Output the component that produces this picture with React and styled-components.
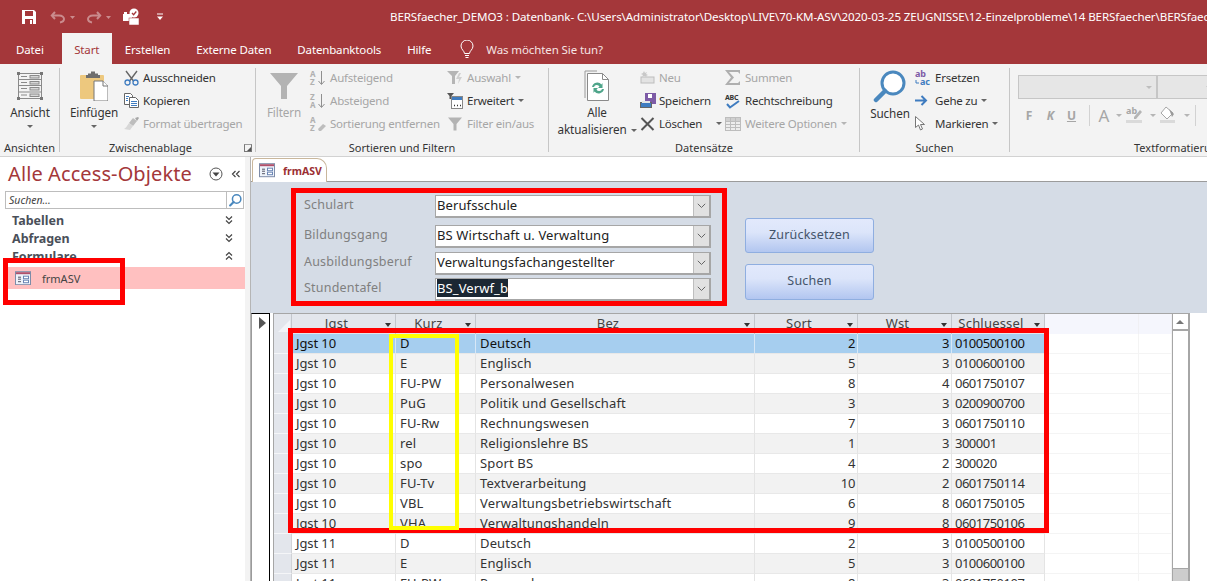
import React from 'react'
import styled, { createGlobalStyle } from 'styled-components'

const GlobalStyle = createGlobalStyle`
  html, body { margin: 0; padding: 0; background: #fff; }
  body { font-family: "Noto Sans", "Open Sans", sans-serif; font-size: 12px; color: #333; }
  * { box-sizing: border-box; }
`

const RED = '#A4373A'

const Page = styled.div`
  position: relative;
  width: 1207px;
  height: 581px;
  overflow: hidden;
  display: flex;
  flex-direction: column;
`

const TitleBar = styled.div`
  height: 33px;
  background: ${RED};
  display: flex;
  align-items: center;
  padding-left: 21px;
  color: #fff;
  flex: none;
`

const QuickIcon = styled.div`
  width: ${p => p.$w || 16}px;
  height: 18px;
  display: flex;
  align-items: center;
  opacity: ${p => (p.$off ? 0.42 : 1)};
  flex: none;
`

const Title = styled.div`
  margin-left: 226px;
  white-space: nowrap;
  font-size: 11.6px;
  letter-spacing: -0.12px;
  flex: none;
`

const TabBar = styled.div`
  height: 31px;
  background: ${RED};
  display: flex;
  align-items: stretch;
  padding-left: 3px;
  flex: none;
`

const Tab = styled.div`
  padding: 2px ${p => p.$pad || 13}px 0;
  margin-right: ${p => p.$mr || 0}px;
  display: flex;
  align-items: center;
  font-size: 11.5px;
  letter-spacing: -0.15px;
  color: ${p => (p.$active ? RED : '#fff')};
  background: ${p => (p.$active ? '#F3F3F3' : 'transparent')};
`

const TellMe = styled.div`
  margin-left: 16px;
  display: flex;
  align-items: center;
  gap: 12px;
  color: #f6e4e4;
  font-size: 11.5px;
  letter-spacing: -0.1px;
  padding-top: 2px;
`

const Ribbon = styled.div`
  height: 93px;
  background: #F3F3F3;
  border-bottom: 1px solid #D2D2D2;
  display: flex;
  flex: none;
  overflow: hidden;
`

const Group = styled.div`
  width: ${p => p.$w}px;
  flex: none;
  display: flex;
  flex-direction: column;
  margin-top: 4px;
  height: 84px;
  border-right: ${p => (p.$last ? 'none' : '1px solid #C6C6C6')};
  position: relative;
`

const GroupBody = styled.div`
  flex: 1;
  display: flex;
  min-height: 0;
  padding-left: ${p => p.$pl || 0}px;
`

const GroupLabel = styled.div`
  height: 16px;
  margin-bottom: -5px;
  text-align: ${p => (p.$left ? 'left' : 'center')};
  font-size: 11px;
  line-height: 14px;
  color: #333;
  white-space: nowrap;
  padding-left: ${p => p.$pl || 0}px;
  padding-right: ${p => p.$pr || 0}px;
`

const Launcher = styled.span`
  position: absolute;
  right: 3px;
  bottom: 0;
  width: 8px;
  height: 8px;
  border: 1px solid #777;
  border-top-color: #999;
  &::after {
    content: '';
    position: absolute;
    right: 0;
    bottom: 0;
    border: 2px solid transparent;
    border-right-color: #555;
    border-bottom-color: #555;
  }
`

const BigButton = styled.div`
  width: ${p => p.$w}px;
  flex: none;
  display: flex;
  flex-direction: column;
  align-items: center;
  padding-top: ${p => p.$pt ?? 3}px;
  font-size: 11.7px;
  line-height: 17px;
  letter-spacing: -0.1px;
  color: ${p => (p.$off ? '#A6A6A6' : '#333')};
  white-space: nowrap;
  text-align: center;
  margin-right: ${p => p.$mr || 0}px;
`

const BigIcon = styled.div`
  height: ${p => p.$h || 30}px;
  margin-bottom: ${p => p.$mb ?? 2}px;
  display: flex;
  align-items: center;
  justify-content: center;
`

const Caret = styled.span`
  display: inline-block;
  width: 0;
  height: 0;
  border: 3px solid transparent;
  border-top: 3px solid ${p => (p.$off ? '#B5B5B5' : '#666')};
  border-bottom: 0;
  margin-left: ${p => p.$ml ?? 4}px;
  margin-top: ${p => p.$mt || 0}px;
  vertical-align: middle;
  flex: none;
`

const Stack = styled.div`
  width: ${p => p.$w}px;
  flex: none;
  margin-top: -2px;
  display: flex;
  flex-direction: column;
`

const SmallItem = styled.div`
  height: 23px;
  display: flex;
  align-items: center;
  font-size: 11.5px;
  letter-spacing: -0.22px;
  white-space: nowrap;
  color: ${p => (p.$off ? '#A6A6A6' : '#333')};
`

const SmallIcon = styled.div`
  width: ${p => p.$w || 19}px;
  flex: none;
  display: flex;
  align-items: center;
  justify-content: flex-start;
`

const FormatPane = styled.div`
  padding: 7px 0 0 8px;
`

const GreyCombos = styled.div`
  display: flex;
  width: 240px;
  height: 24px;
`

const GreyCombo = styled.div`
  width: ${p => p.$w}px;
  flex: none;
  background: #E6E6E6;
  border: 1px solid #C6C6C6;
  position: relative;
  &::after {
    content: '';
    position: absolute;
    right: 4px;
    top: 10px;
    border: 3px solid transparent;
    border-top-color: #BEBEBE;
    border-bottom: 0;
  }
`

const FormatRow = styled.div`
  display: flex;
  align-items: center;
  height: 22px;
  margin-top: 5px;
  color: #A6A6A6;
  font-weight: 700;
  font-size: 12px;
`

const FormatKey = styled.span`
  width: ${p => p.$w || 21}px;
  text-align: center;
  font-style: ${p => (p.$i ? 'italic' : 'normal')};
  font-size: ${p => p.$size || 12}px;
  font-weight: ${p => (p.$size ? 400 : 700)};
  text-decoration: ${p => (p.$u ? 'underline' : 'none')};
  flex: none;
  display: flex;
  justify-content: center;
`

const FormatSep = styled.span`
  width: 1px;
  height: 21px;
  background: #D2D2D2;
  margin: 0 ${p => p.$mr || 6}px 0 ${p => p.$ml || 7}px;
  flex: none;
`

const Main = styled.div`
  flex: 1;
  display: flex;
  min-height: 0;
`

const NavPane = styled.div`
  width: 245px;
  flex: none;
  background: #fff;
  padding-top: 1px;
`

const NavHead = styled.div`
  display: flex;
  align-items: center;
  gap: 8px;
  height: 31px;
  padding: 0 4px 0 8px;
`

const NavTitle = styled.div`
  font-size: 20px;
  color: ${RED};
  flex: 1;
  white-space: nowrap;
  letter-spacing: 0.1px;
`

const NavSearch = styled.div`
  margin: 2px 1px 0 5px;
  height: 18px;
  border: 1px solid #BDBDBD;
  display: flex;
  align-items: center;
  font-size: 10.5px;
  font-style: italic;
  color: #444;
  padding-left: 3px;
  justify-content: space-between;
`

const SearchBtn = styled.div`
  width: 17px;
  height: 16px;
  border-left: 1px solid #BDBDBD;
  display: flex;
  align-items: center;
  justify-content: center;
`

const NavGroup = styled.div`
  height: 18px;
  margin-top: ${p => p.$mt || 0}px;
  display: flex;
  align-items: center;
  justify-content: space-between;
  padding: 0 11px 0 12px;
  font-weight: 700;
  font-size: 12.5px;
  color: #4A4F59;
`

const NavItem = styled.div`
  height: 22px;
  margin-top: 2px;
  margin-left: 5px;
  background: #FFC0C0;
  display: flex;
  align-items: center;
  gap: 11px;
  padding-left: 10px;
  font-size: 11px;
  color: #444;
`

const Splitter = styled.div`
  width: 6px;
  flex: none;
  background: #F3F3F3;
  border-right: 1px solid #B5B5B5;
`

const Content = styled.div`
  flex: 1;
  min-width: 0;
  display: flex;
  flex-direction: column;
`

const DocStrip = styled.div`
  height: 25px;
  flex: none;
  background: #fff;
  border-bottom: 1px solid #9B9B9B;
  padding: 1px 0 0 1px;
`

const DocTab = styled.div`
  width: 75px;
  height: 24px;
  border: 1px solid #C9B79C;
  border-bottom: none;
  border-radius: 4px 10px 0 0;
  display: flex;
  align-items: center;
  gap: 8px;
  padding-left: 6px;
  color: #9B2F33;
  font-weight: 700;
  font-size: 10.5px;
  background: #fff;
`

const FormHeader = styled.div`
  height: 131px;
  flex: none;
  background: #D5DCE6;
  display: flex;
  padding: 13px 0 0 53px;
`

const Filters = styled.div`
  width: 407px;
  flex: none;
`

const FilterRow = styled.div`
  display: grid;
  grid-template-columns: 131px 276px;
  align-items: center;
  height: 23px;
  margin-top: ${p => p.$mt || 0}px;
`

const FilterLabel = styled.div`
  font-size: 12.5px;
  color: #808080;
  letter-spacing: 0.2px;
  position: relative;
  top: -2px;
`

const Combo = styled.div`
  height: 23px;
  border: 2px solid #A6A6A6;
  border-top-width: 1px;
  border-left-width: 1px;
  background: #fff;
  display: flex;
  font-size: 13px;
  color: #222;
  letter-spacing: 0.1px;
  line-height: 19px;
`

const ComboValue = styled.div`
  flex: 1;
  padding-left: 1px;
  white-space: nowrap;
  overflow: hidden;
  & > mark {
    background: #1B2733;
    color: #fff;
  }
`

const ComboArrow = styled.div`
  width: 16px;
  flex: none;
  background: #E1E1E1;
  border-left: 1px solid #BEBEBE;
  display: flex;
  align-items: center;
  justify-content: center;
`

const Actions = styled.div`
  margin: 23px 0 0 34px;
  width: 129px;
  display: flex;
  flex-direction: column;
  gap: 11px;
`

const ActionButton = styled.div`
  height: ${p => p.$h}px;
  border: 1px solid #8FAEE0;
  border-radius: 3px;
  background: linear-gradient(#E2E9FC, #DCE5FA 40%, #B2C6F0);
  color: #44546A;
  font-size: 12.5px;
  letter-spacing: 0.2px;
  padding: 0 0 3px;
  display: flex;
  align-items: center;
  justify-content: center;
`

const SheetArea = styled.div`
  flex: 1;
  min-height: 0;
  display: flex;
  background: #fff;
`

const RecordPane = styled.div`
  width: 19px;
  flex: none;
  border-top: 1px solid #000;
  border-right: 1px solid #000;
  border-left: 1px solid #9B9B9B;
  position: relative;
  &::after {
    content: '';
    position: absolute;
    left: 7px;
    top: 3px;
    border: 6px solid transparent;
    border-left: 7px solid #555;
    border-right: 0;
  }
`

const Sheet = styled.div`
  width: 917px;
  flex: none;
  display: flex;
  border-top: 1px solid #A6A6A6;
  border-right: 2px solid #A6A6A6;
  border-left: 1px solid #A6A6A6;
  margin-left: 3px;
  overflow: hidden;
`

const Rows = styled.div`
  flex: 1;
  min-width: 0;
`

const COLUMNS = '18px 104px 80px 279px 103px 94px 93px 94px 1fr'

const HeaderRow = styled.div`
  display: grid;
  grid-template-columns: ${COLUMNS};
  height: 20px;
`

const HeadCell = styled.div`
  position: relative;
  background: ${p => (p.$empty ? '#F5F6FD' : '#E3E6EC')};
  border-right: 1px solid ${p => (p.$empty ? '#F0F0F4' : '#C3C6CC')};
  text-align: center;
  font-size: 13px;
  letter-spacing: 0.2px;
  line-height: 18px;
  color: #444;
  padding-right: 14px;
  overflow: hidden;
`

const HeadArrow = styled.span`
  position: absolute;
  right: 4px;
  top: 9px;
  border: 3px solid transparent;
  border-top: 4px solid #333;
  border-bottom: 0;
`

const Corner = styled.svg`
  display: block;
`

const DataRow = styled.div`
  display: grid;
  grid-template-columns: ${COLUMNS};
  height: 20px;
  background: ${p => (p.$selected ? '#A6CEEF' : p.$alt ? '#F2F2F2' : '#fff')};
  font-size: 13px;
  line-height: 19px;
  color: ${p => (p.$selected ? '#111' : '#333')};
`

const RowSelector = styled.div`
  background: #E3E6EC;
  border-bottom: 1px solid #F5F6F8;
  border-right: 1px solid #D0D2D6;
`

const Cell = styled.div`
  border-right: 1px solid ${p => (p.$selected ? '#D7E7F6' : '#E4E4E4')};
  border-bottom: 1px solid #E8E8E8;
  padding: 0 ${p => (p.$num ? 1.5 : 2)}px 0 ${p => (p.$code ? 3 : 4)}px;
  text-align: ${p => (p.$num ? 'right' : 'left')};
  letter-spacing: ${p => p.$ls || 0}px;
  white-space: nowrap;
  overflow: hidden;
`

const BlankCell = styled.div`
  background: #fff;
  border-right: 1px solid #F4F4F4;
  border-bottom: 1px solid #F4F4F4;
`

const ScrollBar = styled.div`
  width: 16px;
  flex: none;
  display: flex;
  flex-direction: column;
  background: #CDCDCD;
  border-left: 1px solid #A6A6A6;
`

const ScrollUp = styled.div`
  height: 17px;
  flex: none;
  background: #fff;
  border-bottom: 2px solid #A6A6A6;
  position: relative;
  &::after {
    content: '';
    position: absolute;
    left: 3px;
    top: 6px;
    border: 4px solid transparent;
    border-bottom: 4px solid #777;
    border-top: 0;
  }
`

const ScrollThumb = styled.div`
  height: 238px;
  flex: none;
  background: #fff;
  border-bottom: 1px solid #A6A6A6;
`

const Highlight = styled.div`
  position: absolute;
  left: ${p => p.$x}px;
  top: ${p => p.$y}px;
  width: ${p => p.$w}px;
  height: ${p => p.$h}px;
  border: ${p => p.$t || 5}px solid ${p => p.$color || '#FF0000'};
  pointer-events: none;
`

const FormIcon = ({ w = 16 }) => (
  <svg width={w} height={w * 0.9} viewBox="0 0 16 14">
    <rect x="0.5" y="0.5" width="15" height="13" fill="#EEF3FA" stroke="#7E8CA8" />
    <rect x="1" y="1" width="14" height="2" fill="#B0506A" />
    <path d="M3 6h3M3 8h3M3 10.5h3" stroke="#556" />
    <rect x="8.5" y="5" width="5" height="2.5" fill="#fff" stroke="#6C86B5" />
    <rect x="8.5" y="9" width="5" height="2.5" fill="#fff" stroke="#6C86B5" />
  </svg>
)

const Chevrons = ({ up, left }) => (
  <svg width="10" height="10" viewBox="0 0 10 10" fill="none" stroke="#444" strokeWidth="1.2">
    {left
      ? <path d="M4.500 2 1.500 5l3 3M8.500 2l-3 3 3 3" />
      : up
        ? <path d="M2 4.500 5 1.500l3 3M2 8.500l3-3 3 3" />
        : <path d="M2 1.500l3 3 3-3M2 5.500l3 3 3-3" />}
  </svg>
)

const SaveIcon = () => (
  <svg width="16" height="16" viewBox="0 0 16 16">
    <path d="M1 1h12l2 2v12H1z" fill="#fff" />
    <rect x="4" y="2" width="8" height="5" fill={RED} />
    <rect x="4" y="10" width="8" height="5" fill={RED} />
    <rect x="9" y="11" width="2" height="4" fill="#fff" />
  </svg>
)

const UndoIcon = ({ flip }) => (
  <svg width="26" height="14" viewBox="0 0 26 14" fill="none">
    <g transform={flip ? 'translate(16 0) scale(-1 1)' : undefined}>
      <path d="M5 2 1.800 5.500 5 9" stroke="#fff" strokeWidth="2" />
      <path d="M2 5.500h7c3.500 0 5 2 5 3.500S12.500 12 10 12.500" stroke="#fff" strokeWidth="2" />
    </g>
    <path d="M20 6h5l-2.500 3z" fill="#fff" />
  </svg>
)

const AccessCheckIcon = () => (
  <svg width="18" height="18" viewBox="0 0 18 18">
    <rect x="1" y="6" width="9" height="7" fill="#fff" />
    <rect x="7" y="10" width="10" height="7" fill="#fff" stroke={RED} strokeWidth="0.5" />
    <rect x="2" y="4" width="3" height="3" fill="#fff" />
    <circle cx="12" cy="5" r="4.500" fill="#fff" />
    <path d="M10 5l1.600 1.700L14.300 3.500" stroke={RED} strokeWidth="1.300" fill="none" />
  </svg>
)

const QuickDrop = () => (
  <svg width="8" height="8" viewBox="0 0 8 8">
    <path d="M1 1h6" stroke="#fff" />
    <path d="M1 3.500h6L4 7z" fill="#fff" />
  </svg>
)

const BulbIcon = () => (
  <svg width="14" height="19" viewBox="0 0 14 19" fill="none" stroke="#fff" strokeWidth="1">
    <path d="M4.500 13.500C4.500 11 1 9.500 1 6a6 6 0 0 1 12 0c0 3.500-3.500 5-3.500 7.500z" />
    <path d="M5 15.500h4M5.500 17.500h3" />
  </svg>
)

const ViewIcon = () => (
  <svg width="28" height="30" viewBox="0 0 28 30" fill="none" stroke="#8A8A8A">
    <rect x="2.500" y="2.500" width="23" height="25" />
    <path d="M2.500 8.500h23M2.500 14.500h23M2.500 21h23" />
    <rect x="14" y="4.500" width="9" height="2.500" fill="#D7D7D7" />
    <rect x="14" y="10.500" width="9" height="2.500" fill="#D7D7D7" />
    <rect x="14" y="16.500" width="9" height="2.500" fill="#D7D7D7" />
    <rect x="14" y="23" width="9" height="2.500" fill="#D7D7D7" />
    <path d="M5 5.500h6M5 11.500h6M5 17.500h6M5 24h6" />
    <g fill="#777" stroke="none">
      <rect x="1" y="1" width="3" height="3" />
      <rect x="24" y="1" width="3" height="3" />
      <rect x="1" y="26" width="3" height="3" />
      <rect x="24" y="26" width="3" height="3" />
    </g>
  </svg>
)

const PasteIcon = () => (
  <svg width="28" height="30" viewBox="0 0 28 30">
    <rect x="0" y="4" width="24" height="24" rx="1" fill="#EDC87E" />
    <path d="M8 4V2.500h3V0.500h4v2h3V4h2v3H6V4z" fill="#6E6E6E" />
    <path d="M14 10h9l5 5v15H14z" fill="#fff" stroke="#777" />
    <path d="M23 10v5h5" fill="#fff" stroke="#777" />
  </svg>
)

const ScissorsIcon = () => (
  <svg width="15" height="16" viewBox="0 0 15 16" fill="none">
    <path d="M2 1l7.500 10M13 1 5.500 11" stroke="#666" strokeWidth="1.400" />
    <circle cx="3.500" cy="12.500" r="2.500" stroke="#3F7CC0" strokeWidth="1.300" />
    <circle cx="11.500" cy="12.500" r="2.500" stroke="#3F7CC0" strokeWidth="1.300" />
  </svg>
)

const CopyIcon = () => (
  <svg width="15" height="15" viewBox="0 0 15 15" fill="#fff">
    <path d="M.5.500h6l2 2v9h-8z" stroke="#666" />
    <path d="M5.500 4.500h6l3 3v7h-9z" stroke="#666" />
    <path d="M7 8.500h6M7 10.500h6M7 12.500h6" stroke="#3F7CC0" />
    <path d="M2 3.500h3M2 5.500h2M2 7.500h2" stroke="#3F7CC0" />
  </svg>
)

const BrushIcon = () => (
  <svg width="15" height="14" viewBox="0 0 15 14">
    <path d="M9 1l4 3-4 5-4-3z" fill="#BDBDBD" />
    <path d="M5 6l4 3-3 4-6-1c2-1 3-3 5-6z" fill="#D7D7D7" />
    <path d="M11 1l3-1 1 1-2 3z" fill="#A6A6A6" />
  </svg>
)

const FunnelIcon = ({ w = 28, h = 28, color = '#B3B3B3' }) => (
  <svg width={w} height={h} viewBox="0 0 28 28">
    <path d="M0 1h28L17 14v13h-6V14z" fill={color} />
  </svg>
)

const SortIcon = ({ a, b, eraser }) => (
  <svg width="16" height="16" viewBox="0 0 16 16" overflow="visible" fontFamily="Noto Sans" fontSize="8" fontWeight="700" fill="#B0B0B0">
    <text x="0" y="7">{a}</text>
    <text x="0" y="15">{b}</text>
    {eraser
      ? <path d="M8 13l5-5 3 2-5 5H9z" fill="#BDBDBD" />
      : <path d="M11.500 1v13M8.500 11l3 3.500 3-3.500" fill="none" stroke="#8F8F8F" />}
  </svg>
)

const SelectionFilterIcon = () => (
  <svg width="16" height="15" viewBox="0 0 16 15">
    <path d="M0 1h12L8 6v8H5V6z" fill="#B5B5B5" />
    <path d="M12 3 9 9h3l-1 5 4-7h-3l2-4z" fill="#D0D0D0" />
  </svg>
)

const AdvancedFilterIcon = () => (
  <svg width="16" height="16" viewBox="0 0 16 16">
    <path d="M0 0h7L4.500 3v3h-2V3z" fill="#555" />
    <rect x="4.500" y="3.500" width="11" height="12" fill="#fff" stroke="#888" />
    <rect x="5" y="4" width="10" height="3" fill="#3F7CC0" />
    <path d="M7 12.500h1M10 12.500h1M13 12.500h1" stroke="#333" strokeWidth="1.500" />
  </svg>
)

const RefreshIcon = () => (
  <svg width="26" height="33" viewBox="0 0 26 33" fill="none">
    <path d="M1 28V1h12" stroke="#9A9A9A" />
    <path d="M3.500 30.500V3.500h15l6 6v21z" fill="#fff" stroke="#8A8A8A" />
    <path d="M18.500 3.500v6h6" stroke="#8A8A8A" />
    <path d="M8 17a5.500 5.500 0 0 1 9.500-2.500l1-1.500v5h-4.500l1.500-1.500A3 3 0 0 0 10 17z" fill="#4FA58A" />
    <path d="M20 19a5.500 5.500 0 0 1-9.500 2.500l-1 1.500v-5H14l-1.500 1.500A3 3 0 0 0 18 19z" fill="#4FA58A" />
  </svg>
)

const NewIcon = () => (
  <svg width="15" height="13" viewBox="0 0 15 13">
    <rect x="1" y="6" width="13" height="6" fill="#E3E3E3" stroke="#BDBDBD" />
    <path d="M4 0l1 2 2-1-1 2 2 1-2 1 1 1-3-1-2 1 1-2-2-1 2-1z" fill="#C8C8C8" />
  </svg>
)

const SaveRecordIcon = () => (
  <svg width="16" height="15" viewBox="0 0 16 15">
    <rect x="5" y="0" width="11" height="11" fill="#7D5BA6" />
    <rect x="8" y="1" width="4" height="4" fill="#fff" />
    <rect x="0.500" y="9.500" width="11" height="5" fill="#3F7CC0" stroke="#666" />
    <rect x="2" y="8" width="8" height="2" fill="#E6E6E6" />
  </svg>
)

const CrossIcon = () => (
  <svg width="15" height="14" viewBox="0 0 15 14">
    <path d="M1.500 1l12 12M13.500 1l-12 12" stroke="#555" strokeWidth="2" />
  </svg>
)

const SigmaIcon = () => (
  <svg width="16" height="15" viewBox="0 0 16 15">
    <path d="M0 0h15v4l-2-2H4l5 5.500L4 13h9l2-2v4H0l6-7.500z" fill="#AFAFAF" />
  </svg>
)

const SpellIcon = () => (
  <svg width="16" height="16" viewBox="0 0 16 16" overflow="visible">
    <text x="0" y="6.500" fontFamily="Noto Sans" fontSize="7" fontWeight="700" fill="#333">ABC</text>
    <path d="M2 11l3 3.500L14 8" fill="none" stroke="#3F7CC0" strokeWidth="2" />
  </svg>
)

const GridIcon = () => (
  <svg width="16" height="14" viewBox="0 0 16 14" fill="#EDEDED" stroke="#BDBDBD">
    <rect x=".5" y=".5" width="15" height="13" />
    <rect x=".5" y=".5" width="15" height="4" fill="#D0D0D0" />
    <path d="M5.500.5v13M10.500.5v13M.5 7.500h15M.5 10.500h15" fill="none" />
  </svg>
)

const LensIcon = ({ s = 34, sw = 3 }) => (
  <svg width={s} height={s} viewBox="0 0 34 34" fill="none">
    <circle cx="20" cy="13" r="11" stroke="#4A88BE" strokeWidth={sw} fill="#fff" />
    <path d="M12 21 3 30" stroke="#4A88BE" strokeWidth={sw + 1.500} strokeLinecap="round" />
  </svg>
)

const ReplaceIcon = () => (
  <svg width="17" height="16" viewBox="0 0 17 16" overflow="visible" fontFamily="Noto Sans" fontWeight="700" fontSize="9">
    <text x="0" y="7" fill="#7D5BA6">ab</text>
    <text x="5" y="15" fill="#3F7CC0">ac</text>
    <path d="M1 10v3h3" fill="none" stroke="#3F7CC0" />
  </svg>
)

const ArrowIcon = () => (
  <svg width="13" height="11" viewBox="0 0 13 11">
    <path d="M0 5.500h10M6.500 1l4.500 4.500L6.500 10" fill="none" stroke="#3F7CC0" strokeWidth="2" />
  </svg>
)

const PointerIcon = () => (
  <svg width="11" height="15" viewBox="0 0 11 15">
    <path d="M.5.500v11l3-2.500 2 5 2-1-2-4.500h4z" fill="#fff" stroke="#777" />
  </svg>
)

const ChevronSmall = () => (
  <svg width="9" height="6" viewBox="0 0 9 6" fill="none" stroke="#666">
    <path d="M.8.800 4.500 4.500 8.200.800" />
  </svg>
)

const FilterCircle = () => (
  <svg width="14" height="14" viewBox="0 0 14 14">
    <circle cx="7" cy="7" r="6" fill="none" stroke="#555" />
    <path d="M3.500 5.500h7L7 9.500z" fill="#444" />
  </svg>
)

const HighlightPenIcon = () => (
  <svg width="17" height="18" viewBox="0 0 17 18" overflow="visible">
    <text x="0" y="8" fontFamily="Noto Sans" fontSize="9" fill="#A6A6A6">ab</text>
    <path d="M8 11l6-7 2 2-6 7H8z" fill="#B5B5B5" />
    <rect x="0" y="14" width="16" height="3" fill="#DADADA" />
  </svg>
)

const FillIcon = () => (
  <svg width="16" height="18" viewBox="0 0 16 18">
    <path d="M6 1 1 7l6 6 6-6z" fill="#fff" stroke="#A6A6A6" />
    <path d="M9 3l5 5-2 3z" fill="#9A9A9A" />
    <rect x="0" y="14" width="15" height="3" fill="#DADADA" />
  </svg>
)

const rows = [
  ['Jgst 10', 'D', 'Deutsch', 2, 3, '0100500100'],
  ['Jgst 10', 'E', 'Englisch', 5, 3, '0100600100'],
  ['Jgst 10', 'FU-PW', 'Personalwesen', 8, 4, '0601750107'],
  ['Jgst 10', 'PuG', 'Politik und Gesellschaft', 3, 3, '0200900700'],
  ['Jgst 10', 'FU-Rw', 'Rechnungswesen', 7, 3, '0601750110'],
  ['Jgst 10', 'rel', 'Religionslehre BS', 1, 3, '300001'],
  ['Jgst 10', 'spo', 'Sport BS', 4, 2, '300020'],
  ['Jgst 10', 'FU-Tv', 'Textverarbeitung', 10, 2, '0601750114'],
  ['Jgst 10', 'VBL', 'Verwaltungsbetriebswirtschaft', 6, 8, '0601750105'],
  ['Jgst 10', 'VHA', 'Verwaltungshandeln', 9, 8, '0601750106'],
  ['Jgst 11', 'D', 'Deutsch', 2, 3, '0100500100'],
  ['Jgst 11', 'E', 'Englisch', 5, 3, '0100600100'],
  ['Jgst 11', 'FU-PW', 'Personalwesen', 8, 3, '0601750107'],
]

const headers = ['Jgst', 'Kurz', 'Bez', 'Sort', 'Wst', 'Schluessel']

const filters = [
  { label: 'Schulart', value: 'Berufsschule' },
  { label: 'Bildungsgang', value: 'BS Wirtschaft u. Verwaltung', mt: 7 },
  { label: 'Ausbildungsberuf', value: 'Verwaltungsfachangestellter', mt: 4 },
  { label: 'Stundentafel', value: 'BS_Verwf_b', mt: 3, marked: true },
]

export default function App() {
  return (
    <Page>
      <GlobalStyle />
      <TitleBar>
        <QuickIcon $w={29}><SaveIcon /></QuickIcon>
        <QuickIcon $w={36} $off><UndoIcon /></QuickIcon>
        <QuickIcon $w={36} $off><UndoIcon flip /></QuickIcon>
        <QuickIcon $w={34}><AccessCheckIcon /></QuickIcon>
        <QuickIcon $w={8}><QuickDrop /></QuickIcon>
        <Title>BERSfaecher_DEMO3 : Datenbank- C:\Users\Administrator\Desktop\LIVE\70-KM-ASV\2020-03-25 ZEUGNISSE\12-Einzelprobleme\14 BERSfaecher\BERSfaecher_DEMO3.accdb</Title>
      </TitleBar>

      <TabBar>
        <Tab $mr={5}>Datei</Tab>
        <Tab $active $pad={12.5}>Start</Tab>
        <Tab>Erstellen</Tab>
        <Tab>Externe Daten</Tab>
        <Tab>Datenbanktools</Tab>
        <Tab>Hilfe</Tab>
        <TellMe><BulbIcon />Was möchten Sie tun?</TellMe>
      </TabBar>

      <Ribbon>
        <Group $w={60}>
          <GroupBody>
            <BigButton $w={60}>
              <BigIcon $h={30} $mb={3}><ViewIcon /></BigIcon>
              Ansicht
              <Caret $ml={0} $mt={4} />
            </BigButton>
          </GroupBody>
          <GroupLabel>Ansichten</GroupLabel>
        </Group>

        <Group $w={196}>
          <GroupBody $pl={6}>
            <BigButton $w={56} $mr={2}>
              <BigIcon $h={30} $mb={3}><PasteIcon /></BigIcon>
              Einfügen
              <Caret $ml={0} $mt={4} />
            </BigButton>
            <Stack $w={130}>
              <SmallItem><SmallIcon><ScissorsIcon /></SmallIcon>Ausschneiden</SmallItem>
              <SmallItem><SmallIcon><CopyIcon /></SmallIcon>Kopieren</SmallItem>
              <SmallItem $off><SmallIcon><BrushIcon /></SmallIcon>Format übertragen</SmallItem>
            </Stack>
          </GroupBody>
          <GroupLabel $pr={14}>Zwischenablage</GroupLabel>
          <Launcher />
        </Group>

        <Group $w={293}>
          <GroupBody $pl={11}>
            <BigButton $w={34} $mr={9} $off>
              <BigIcon $h={30} $mb={3}><FunnelIcon /></BigIcon>
              Filtern
            </BigButton>
            <Stack $w={137}>
              <SmallItem $off><SmallIcon $w={20}><SortIcon a="A" b="Z" /></SmallIcon>Aufsteigend</SmallItem>
              <SmallItem $off><SmallIcon $w={20}><SortIcon a="Z" b="A" /></SmallIcon>Absteigend</SmallItem>
              <SmallItem $off><SmallIcon $w={20}><SortIcon a="A" b="Z" eraser /></SmallIcon>Sortierung entfernen</SmallItem>
            </Stack>
            <Stack $w={90}>
              <SmallItem $off><SmallIcon $w={20}><SelectionFilterIcon /></SmallIcon>Auswahl<Caret $off /></SmallItem>
              <SmallItem><SmallIcon $w={20}><AdvancedFilterIcon /></SmallIcon>Erweitert<Caret /></SmallItem>
              <SmallItem $off><SmallIcon $w={20}><FunnelIcon w={16} h={14} /></SmallIcon>Filter ein/aus</SmallItem>
            </Stack>
          </GroupBody>
          <GroupLabel>Sortieren und Filtern</GroupLabel>
        </Group>

        <Group $w={311}>
          <GroupBody $pl={9}>
            <BigButton $w={78} $mr={4} $pt={2}>
              <BigIcon $h={33} $mb={1}><RefreshIcon /></BigIcon>
              Alle
              <span>aktualisieren<Caret /></span>
            </BigButton>
            <Stack $w={85}>
              <SmallItem $off><SmallIcon><NewIcon /></SmallIcon>Neu</SmallItem>
              <SmallItem><SmallIcon><SaveRecordIcon /></SmallIcon>Speichern</SmallItem>
              <SmallItem><SmallIcon><CrossIcon /></SmallIcon>Löschen<Caret $ml={14} /></SmallItem>
            </Stack>
            <Stack $w={130}>
              <SmallItem $off><SmallIcon $w={20}><SigmaIcon /></SmallIcon>Summen</SmallItem>
              <SmallItem><SmallIcon $w={20}><SpellIcon /></SmallIcon>Rechtschreibung</SmallItem>
              <SmallItem $off><SmallIcon $w={20}><GridIcon /></SmallIcon>Weitere Optionen<Caret $off /></SmallItem>
            </Stack>
          </GroupBody>
          <GroupLabel>Datensätze</GroupLabel>
        </Group>

        <Group $w={150}>
          <GroupBody $pl={8}>
            <BigButton $w={44} $mr={3} $pt={2}>
              <BigIcon $h={34} $mb={1}><LensIcon /></BigIcon>
              Suchen
            </BigButton>
            <Stack $w={90}>
              <SmallItem><SmallIcon $w={20}><ReplaceIcon /></SmallIcon>Ersetzen</SmallItem>
              <SmallItem><SmallIcon $w={20}><ArrowIcon /></SmallIcon>Gehe zu<Caret /></SmallItem>
              <SmallItem><SmallIcon $w={20}><PointerIcon /></SmallIcon>Markieren<Caret /></SmallItem>
            </Stack>
          </GroupBody>
          <GroupLabel>Suchen</GroupLabel>
        </Group>

        <Group $w={200} $last>
          <GroupBody>
            <FormatPane>
              <GreyCombos>
                <GreyCombo $w={139} />
                <GreyCombo $w={60} />
              </GreyCombos>
              <FormatRow>
                <FormatKey $w={22}>F</FormatKey>
                <FormatKey $i>K</FormatKey>
                <FormatKey $u>U</FormatKey>
                <FormatSep />
                <FormatKey $w={16} $size={17}>A</FormatKey>
                <Caret $off />
                <FormatKey $w={24}><HighlightPenIcon /></FormatKey>
                <Caret $off />
                <FormatKey $w={24}><FillIcon /></FormatKey>
                <Caret $off />
                <FormatSep $ml={5} />
              </FormatRow>
            </FormatPane>
          </GroupBody>
          <GroupLabel $left $pl={124}>Textformatierung</GroupLabel>
        </Group>
      </Ribbon>

      <Main>
        <NavPane>
          <NavHead>
            <NavTitle>Alle Access-Objekte</NavTitle>
            <FilterCircle />
            <Chevrons left />
          </NavHead>
          <NavSearch>
            Suchen...
            <SearchBtn><LensIcon s={13} sw={4} /></SearchBtn>
          </NavSearch>
          <NavGroup $mt={2}>Tabellen<Chevrons /></NavGroup>
          <NavGroup>Abfragen<Chevrons /></NavGroup>
          <NavGroup>Formulare<Chevrons up /></NavGroup>
          <NavItem><FormIcon />frmASV</NavItem>
        </NavPane>
        <Splitter />
        <Content>
          <DocStrip>
            <DocTab><FormIcon />frmASV</DocTab>
          </DocStrip>
          <FormHeader>
            <Filters>
              {filters.map(f => (
                <FilterRow key={f.label} $mt={f.mt}>
                  <FilterLabel>{f.label}</FilterLabel>
                  <Combo>
                    <ComboValue>{f.marked ? <mark>{f.value}</mark> : f.value}</ComboValue>
                    <ComboArrow><ChevronSmall /></ComboArrow>
                  </Combo>
                </FilterRow>
              ))}
            </Filters>
            <Actions>
              <ActionButton $h={35}>Zurücksetzen</ActionButton>
              <ActionButton $h={36}>Suchen</ActionButton>
            </Actions>
          </FormHeader>
          <SheetArea>
            <RecordPane />
            <Sheet>
              <Rows>
                <HeaderRow>
                  <HeadCell>
                    <Corner width="18" height="20" viewBox="0 0 18 20">
                      <path d="M4 18 16 6v12z" fill="#F2F4F8" />
                    </Corner>
                  </HeadCell>
                  {headers.map(h => (
                    <HeadCell key={h}>{h}<HeadArrow /></HeadCell>
                  ))}
                  <HeadCell $empty />
                  <HeadCell $empty />
                </HeaderRow>
                {rows.map((r, i) => (
                  <DataRow key={i} $selected={i === 0} $alt={i % 2 === 1}>
                    <RowSelector />
                    <Cell $selected={i === 0} $ls={-0.1}>{r[0]}</Cell>
                    <Cell $selected={i === 0} $ls={0.15}>{r[1]}</Cell>
                    <Cell $selected={i === 0} $ls={0.15}>{r[2]}</Cell>
                    <Cell $selected={i === 0} $num>{r[3]}</Cell>
                    <Cell $selected={i === 0} $num>{r[4]}</Cell>
                    <Cell $selected={i === 0} $code $ls={-0.5}>{r[5]}</Cell>
                    <BlankCell />
                    <BlankCell />
                  </DataRow>
                ))}
              </Rows>
              <ScrollBar>
                <ScrollUp />
                <ScrollThumb />
              </ScrollBar>
            </Sheet>
          </SheetArea>
        </Content>
      </Main>

      <Highlight $x={3} $y={258} $w={122} $h={47} />
      <Highlight $x={291} $y={188} $w={436} $h={118} />
      <Highlight $x={288} $y={328} $w={761} $h={205} />
      <Highlight $x={389} $y={334} $w={70} $h={196} $t={4} $color="#FFFF00" />
    </Page>
  )
}
